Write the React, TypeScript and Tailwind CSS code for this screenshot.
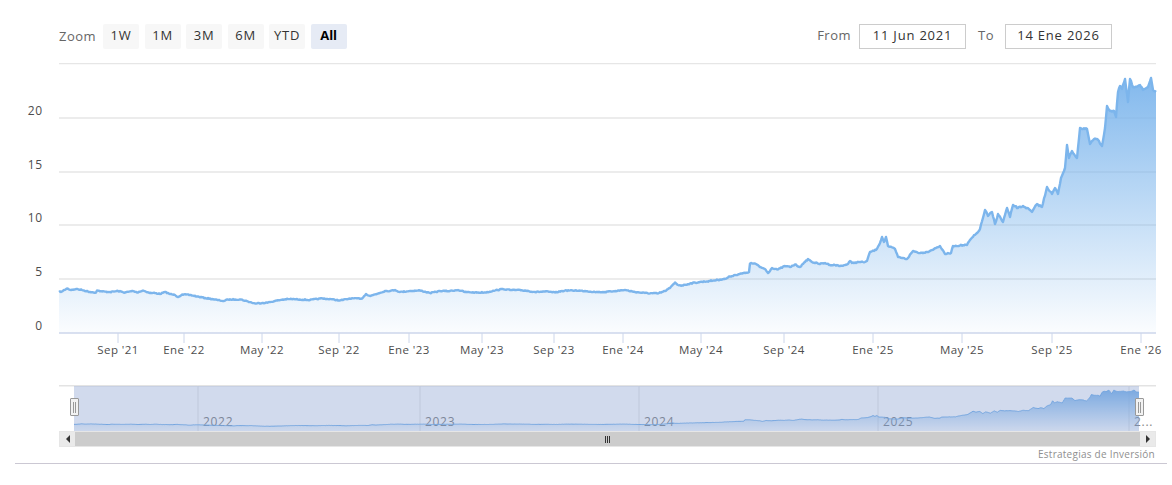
import React from "react";

const KEY: [number, number][] = [
  [59,292],[62,291.5],[67,288.5],[71,290],[76,289],[82,290],[90,292],[96,292.5],[97,290.5],[102,291.5],[110,292],[118,291],[125,292.5],[133,291],[137,292.5],[143,290.5],[150,293],[155,293],[160,294],[165,292],[170,294],[175,295],[178,297],[182,294.5],[190,295],[197,296.5],[205,298],[212,299],[220,300.5],[224,301],[228,299.5],[235,299.5],[241,299.5],[248,301.5],[255,303.5],[262,303],[268,302.5],[275,301],[283,299.5],[290,299],[300,299.5],[310,300],[320,298.5],[330,299],[340,300.5],[350,298.5],[362,298.5],[366,294],[370,296],[378,293.5],[385,291],[390,291],[395,290],[400,292],[410,291],[420,290.5],[430,293],[440,291],[450,291],[458,290],[465,292],[475,292.5],[485,292.5],[495,290.5],[503,289],[510,290],[515,290],[525,290.5],[535,292],[545,291.5],[555,292.5],[565,290.5],[575,290.5],[585,291],[595,292],[605,292],[615,291],[625,290],[635,292],[645,293],[658,293.5],[665,291],[670,288],[675,282.5],[678,285],[682,285.5],[690,283.5],[700,282],[710,281],[720,279.5],[725,279],[730,276.5],[735,275],[745,273],[749,272],[750,263.5],[755,263.5],[760,267],[765,269],[768,273],[772,268],[778,269.5],[785,266],[790,267],[795,264.5],[800,267],[803,264],[805,262],[808,259],[812,262],[820,264],[825,263],[830,265],[835,265],[840,266],[845,265],[848,264],[850,261],[852,263],[860,262],[865,262],[867,261],[870,252],[876,250],[880,243],[882,237],[884,242],[886,237],[888,246],[895,249],[898,257],[902,258],[907,259],[913,251],[920,253],[927,252],[934,249],[940,246],[945,254],[951,253],[953,246],[960,245.5],[967,245],[970,240],[977,233],[980,229],[985,210],[988,216],[992,212],[995,224],[998,214],[1003,222],[1007,208],[1010,217],[1013,205],[1018,208],[1023,206],[1027,208],[1032,212],[1037,204],[1042,207],[1047,187],[1052,194],[1055,188],[1058,194],[1061,178],[1065,168],[1067,145],[1069,158],[1072,151],[1077,158],[1080,128],[1082,129],[1087,129],[1090,144],[1094,139],[1097,139],[1102,146],[1105,128],[1107,106],[1110,111],[1114,111],[1116,117],[1118,92],[1120,86],[1122,89],[1125,79],[1128,102],[1130,79],[1133,87],[1140,85],[1143,90],[1148,87],[1151,78],[1153,90],[1156,92],
];

function series(): [number, number][] {
  const out: [number, number][] = [];
  let seed = 7;
  const rnd = () => {
    seed = (seed * 16807) % 2147483647;
    return seed / 2147483647 - 0.5;
  };
  for (let i = 0; i < KEY.length - 1; i++) {
    const [x0, y0] = KEY[i];
    const [x1, y1] = KEY[i + 1];
    for (let x = x0; x < x1; x++) {
      const t = (x - x0) / (x1 - x0);
      const y = y0 + (y1 - y0) * t;
      const amp = x < 640 ? 0.9 : x < 960 ? 1.1 : 1.6;
      out.push([x, y + (t === 0 ? 0 : rnd() * amp)]);
    }
  }
  out.push(KEY[KEY.length - 1]);
  return out;
}

const DATA = series();
const toPath = (p: [number, number][]) =>
  p.map(([x, y], i) => `${i ? "L" : "M"}${x.toFixed(1)} ${y.toFixed(1)}`).join("");
const MAIN_LINE = toPath(DATA);
const MAIN_AREA = `${MAIN_LINE}L1156 333L59 333Z`;
// Navigator series: x runs 74..1139, y 390..431 in page terms; local y = page y - 385
const NAV = DATA.map(([x, y]): [number, number] => [
  74 + ((x - 59) * 1065) / 1097,
  46 - ((333 - y) * 41) / 255,
]);
const NAV_LINE = toPath(NAV);
const NAV_AREA = `${NAV_LINE}L1139 46L74 46Z`;

const GRID = [63.5, 118, 172, 225, 279];
const Y_LABELS: [string, number][] = [["20", 115], ["15", 169], ["10", 222], ["5", 276], ["0", 330]];
const X_LABELS: [string, number][] = [
  ["Sep '21", 118], ["Ene '22", 184], ["May '22", 262], ["Sep '22", 339], ["Ene '23", 409], ["May '23", 482],
  ["Sep '23", 554], ["Ene '24", 623], ["May '24", 701], ["Sep '24", 784], ["Ene '25", 873], ["May '25", 962],
  ["Sep '25", 1052], ["Ene '26", 1141],
];
const RANGES = ["1W", "1M", "3M", "6M", "YTD", "All"];

function Handle({ className }: { className: string }) {
  return (
    <div className={`absolute top-[13px] flex h-[18px] w-[9px] items-center justify-center gap-px rounded-[1px] border border-[#999] bg-[#f2f2f2] ${className}`}>
      <span className="h-[11px] w-px bg-[#999]" />
      <span className="h-[11px] w-px bg-[#999]" />
    </div>
  );
}

export default function App() {
  return (
    <div className="h-[485px] w-[1172px] overflow-hidden bg-white font-['Open_Sans',sans-serif]">
      <div className="flex h-[63px] items-start pl-[59px] pr-[60px] pt-[24px] text-[13px] tracking-[0.5px]">
        <span className="mr-[7px] h-[25px] leading-[25px] text-[#666]">Zoom</span>
        <div className="flex gap-[5.5px]">
          {RANGES.map((r) => (
            <span
              key={r}
              className={
                r === "All"
                  ? "h-[25px] w-[36px] rounded-[2px] bg-[#e6ebf5] text-center font-bold leading-[23px] tracking-normal text-black"
                  : "h-[25px] w-[36px] rounded-[2px] bg-[#f7f7f7] text-center leading-[23px] tracking-[0.8px] text-[#333]"
              }
            >
              {r}
            </span>
          ))}
        </div>
        <span className="ml-auto mr-[8px] h-[25px] leading-[23px] text-[#666]">From</span>
        <span className="h-[25px] w-[107px] border-[1.5px] border-[#ccc] text-center leading-[21px] tracking-[0.8px] text-[#333]">11 Jun 2021</span>
        <span className="ml-[12px] mr-[11px] h-[25px] leading-[23px] text-[#666]">To</span>
        <span className="h-[25px] w-[107px] border-[1.5px] border-[#ccc] text-center leading-[21px] tracking-[0.8px] text-[#333]">14 Ene 2026</span>
      </div>

      <svg width="1172" height="322" viewBox="0 63 1172 322" className="block">
        <defs>
          <linearGradient id="mainFill" gradientUnits="userSpaceOnUse" x1="0" y1="78" x2="0" y2="333">
            <stop offset="0" stopColor="#7cb5ec" stopOpacity="0.95" />
            <stop offset="1" stopColor="#7cb5ec" stopOpacity="0.03" />
          </linearGradient>
        </defs>
        {GRID.map((y) => (
          <line key={y} x1="59" x2="1156" y1={y} y2={y} stroke="#e6e6e6" strokeWidth="1.3" />
        ))}
        <path d={MAIN_AREA} fill="url(#mainFill)" />
        <path d={MAIN_LINE} fill="none" stroke="#7cb5ec" strokeWidth="2.4" strokeLinejoin="round" />
        <line x1="59" x2="1156" y1="333" y2="333" stroke="#ccd6eb" strokeWidth="1.4" />
        {X_LABELS.map(([t, x]) => (
          <g key={t}>
            <line x1={x} x2={x} y1="333" y2="343" stroke="#ccd6eb" />
            <text x={x} y="354" textAnchor="middle" fontSize="11.5" letterSpacing="0.4" fill="#4d4d4d">{t}</text>
          </g>
        ))}
        {Y_LABELS.map(([t, y]) => (
          <text key={t} x="43" y={y} textAnchor="end" fontSize="12" letterSpacing="0.8" fill="#4d4d4d">{t}</text>
        ))}
      </svg>

      <div className="relative h-[46px] w-full">
        <svg width="1172" height="46" viewBox="0 0 1172 46" className="block">
          <defs>
            <linearGradient id="navFill" gradientUnits="userSpaceOnUse" x1="0" y1="4" x2="0" y2="46">
              <stop offset="0" stopColor="#7cb5ec" stopOpacity="0.95" />
              <stop offset="1" stopColor="#7cb5ec" stopOpacity="0.05" />
            </linearGradient>
          </defs>
          <rect x="59" y="0" width="1097" height="1.5" fill="#e3e3e3" />
          {[198, 420, 639, 878, 1129].map((x) => (
            <line key={x} x1={x} x2={x} y1="0" y2="46" stroke="#e6e6e6" />
          ))}
          {([["2022", 203], ["2023", 425], ["2024", 644], ["2025", 883]] as [string, number][]).map(([t, x]) => (
            <text key={t} x={x} y="41" fontSize="12" letterSpacing="0.7" fill="#888">{t}</text>
          ))}
          <text x="1134" y="41" fontSize="12" letterSpacing="0.7" fill="#888">2...</text>
          <path d={NAV_AREA} fill="url(#navFill)" />
          <path d={NAV_LINE} fill="none" stroke="#7cb5ec" />
          <rect x="74" y="1" width="1065" height="45" fill="#6685c2" fillOpacity="0.3" />
        </svg>
        <Handle className="left-[69.5px]" />
        <Handle className="left-[1134.5px]" />
      </div>

      <div className="ml-[59px] flex h-[16px] w-[1097px] border border-[#e6e6e6] bg-[#ccc]">
        <div className="flex w-[15px] items-center justify-center bg-[#eaeaea]">
          <span className="h-0 w-0 border-y-[4px] border-r-[4px] border-y-transparent border-r-[#333]" />
        </div>
        <div className="flex flex-1 items-center justify-center gap-px">
          <span className="h-[7px] w-px bg-[#333]" />
          <span className="h-[7px] w-px bg-[#333]" />
          <span className="h-[7px] w-px bg-[#333]" />
        </div>
        <div className="flex w-[15px] items-center justify-center bg-[#eaeaea]">
          <span className="h-0 w-0 border-y-[4px] border-l-[4px] border-y-transparent border-l-[#333]" />
        </div>
      </div>

      <div className="ml-[15px] h-[17px] w-[1152px] border-b border-[#cbc8d3] pr-[12px] text-right text-[10px] leading-[14px] tracking-[0.25px] text-[#8f8f8f]">
        Estrategias de Inversión
      </div>
    </div>
  );
}
